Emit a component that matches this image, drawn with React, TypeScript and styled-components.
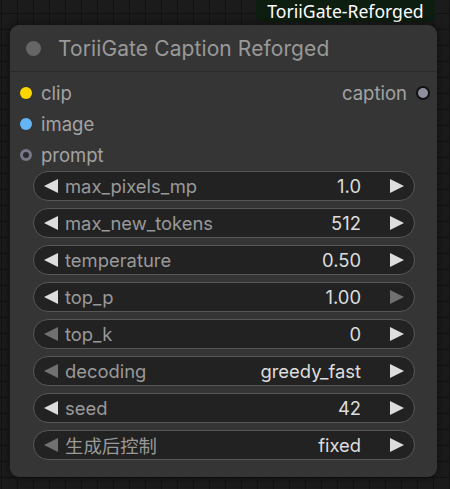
import React from "react";
import styled, { createGlobalStyle } from "styled-components";

const GlobalStyle = createGlobalStyle`
  html, body {
    margin: 0;
    padding: 0;
    background: #191919;
  }
  * {
    box-sizing: border-box;
  }
`;

const Canvas = styled.div`
  position: relative;
  width: 450px;
  height: 489px;
  overflow: hidden;
  background-color: #1b1b1b;
  background-image:
    linear-gradient(#121212 1px, transparent 1px),
    linear-gradient(90deg, #121212 1px, transparent 1px);
  background-size: 16px 16px;
  background-position: 1px 13px;
  font-family: Inter, "Noto Sans", "Noto Sans CJK SC", sans-serif;
`;

const SourceTag = styled.div`
  position: absolute;
  top: 0;
  left: 256px;
  width: 179px;
  height: 22px;
  border-radius: 0 0 7px 7px;
  background: #0d1d0f;
  color: #ffffff;
  font-family: "Noto Sans", sans-serif;
  font-size: 17.6px;
  line-height: 22px;
  text-align: center;
`;

const Node = styled.div`
  position: absolute;
  left: 10px;
  top: 25px;
  width: 427px;
  height: 452px;
  display: flex;
  flex-direction: column;
  background: #353535;
  border-radius: 9px;
  box-shadow: 0 0 10px rgba(0, 0, 0, 0.55);
`;

const TitleBar = styled.div`
  display: flex;
  align-items: center;
  gap: 17px;
  height: 47px;
  padding-left: 16px;
  border-bottom: 1px solid #2a2a2a;
`;

const TitleDot = styled.span`
  width: 15px;
  height: 15px;
  border-radius: 50%;
  background: #666;
`;

const Title = styled.span`
  color: #999;
  font-size: 21px;
  letter-spacing: 0.1px;
`;

const Body = styled.div`
  display: flex;
  flex-direction: column;
  padding: 5px 0 0;
`;

const SlotRow = styled.div`
  display: flex;
  align-items: center;
  justify-content: space-between;
  height: 31px;
  padding: 0 7px 0 10px;
`;

const Slot = styled.div`
  display: flex;
  align-items: center;
  gap: 9px;
  color: #a3a3a3;
  font-size: 18.5px;
`;

const SlotDot = styled.span<{ $color: string; $hollow?: boolean; $outlined?: boolean }>`
  width: 12px;
  height: 12px;
  border-radius: 50%;
  background: ${({ $color, $hollow }) => ($hollow ? "#2a2a2a" : $color)};
  border: ${({ $color, $hollow, $outlined }) =>
    $hollow ? `3px solid ${$color}` : $outlined ? "2px solid #111" : "none"};
`;

const OutputDot = styled(SlotDot)`
  width: 14px;
  height: 14px;
`;

const Widgets = styled.div`
  display: flex;
  flex-direction: column;
  gap: 7px;
  padding: 1px 22px 0 23px;
`;

const Widget = styled.div`
  display: flex;
  align-items: center;
  height: 30px;
  padding: 0 10px;
  background: #222;
  border: 1px solid #575757;
  border-radius: 15px;
  font-size: 18.4px;
`;

const Arrow = styled.span<{ $dir: "left" | "right"; $active: boolean }>`
  width: 0;
  height: 0;
  border-top: 7px solid transparent;
  border-bottom: 7px solid transparent;
  ${({ $dir, $active }) =>
    $dir === "left"
      ? `border-right: 14px solid ${$active ? "#ddd" : "#707070"};`
      : `border-left: 14px solid ${$active ? "#ddd" : "#707070"};`}
`;

const WidgetLabel = styled.span`
  flex: 1;
  margin-left: 7px;
  color: #999;
`;

const WidgetValue = styled.span`
  margin-right: 29px;
  color: #ddd;
`;

const widgets = [
  { label: "max_pixels_mp", value: "1.0", left: true, right: true },
  { label: "max_new_tokens", value: "512", left: true, right: true },
  { label: "temperature", value: "0.50", left: true, right: true },
  { label: "top_p", value: "1.00", left: true, right: false },
  { label: "top_k", value: "0", left: false, right: true },
  { label: "decoding", value: "greedy_fast", left: false, right: true },
  { label: "seed", value: "42", left: true, right: true },
  { label: "生成后控制", value: "fixed", left: false, right: true },
];

export default function App() {
  return (
    <>
      <GlobalStyle />
      <Canvas>
        <SourceTag>ToriiGate-Reforged</SourceTag>
        <Node>
          <TitleBar>
            <TitleDot />
            <Title>ToriiGate Caption Reforged</Title>
          </TitleBar>
          <Body>
            <SlotRow>
              <Slot>
                <SlotDot $color="#ffd500" />
                clip
              </Slot>
              <Slot>
                caption
                <OutputDot $color="#8e8e9e" $outlined />
              </Slot>
            </SlotRow>
            <SlotRow>
              <Slot>
                <SlotDot $color="#64b5f6" />
                image
              </Slot>
            </SlotRow>
            <SlotRow>
              <Slot>
                <SlotDot $color="#77778a" $hollow />
                prompt
              </Slot>
            </SlotRow>
            <Widgets>
              {widgets.map((w) => (
                <Widget key={w.label}>
                  <Arrow $dir="left" $active={w.left} />
                  <WidgetLabel>{w.label}</WidgetLabel>
                  <WidgetValue>{w.value}</WidgetValue>
                  <Arrow $dir="right" $active={w.right} />
                </Widget>
              ))}
            </Widgets>
          </Body>
        </Node>
      </Canvas>
    </>
  );
}
